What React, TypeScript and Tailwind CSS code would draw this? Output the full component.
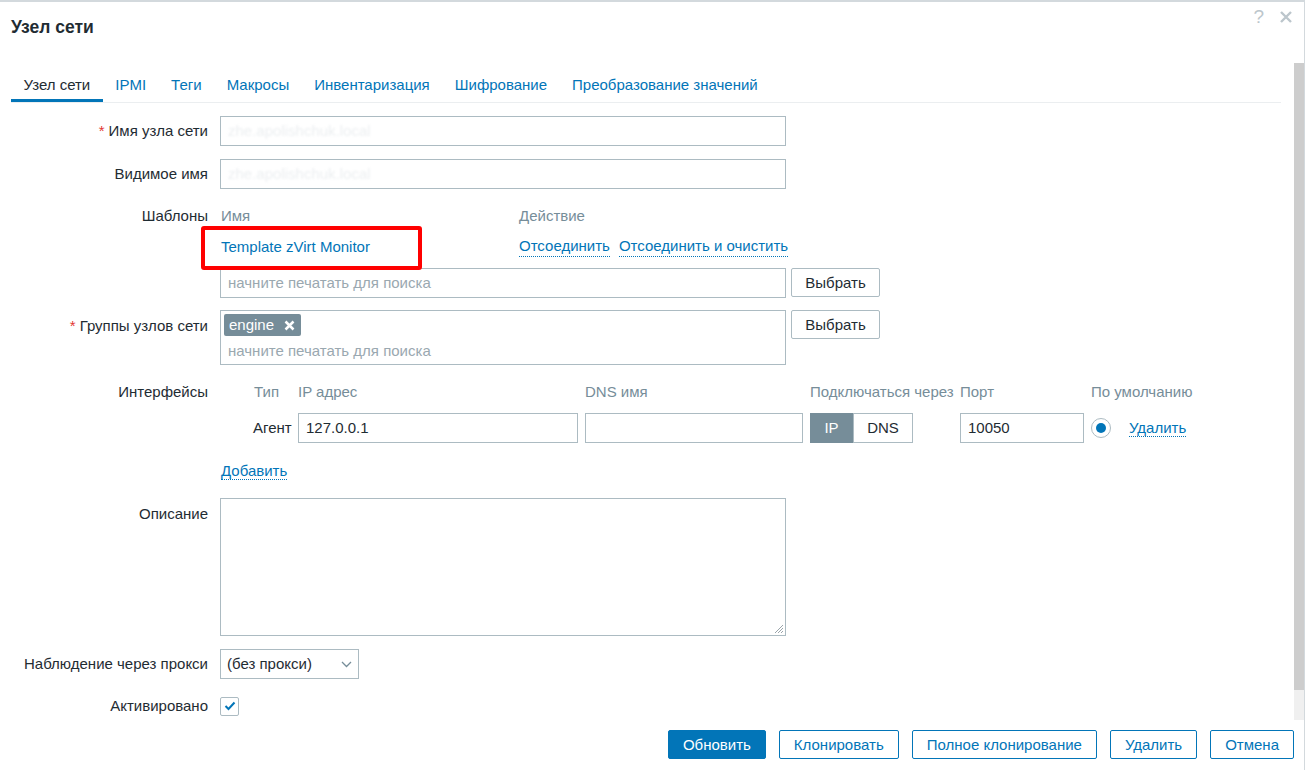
const ink = "text-[#1f2c33]";

function Field({ value, width = "w-[566px]" }: { value?: string; width?: string }) {
  return (
    <div className={`${width} h-[30px] border border-[#acbbc2] bg-white px-[7px] leading-[28px] ${ink} overflow-hidden whitespace-nowrap`}>
      {value}
    </div>
  )
}

function Placeholder({ text, width = "w-[566px]" }: { text: string; width?: string }) {
  return (
    <div className={`${width} h-[30px] border border-[#acbbc2] bg-white px-[7px] leading-[28px] text-[#9aa8b0] whitespace-nowrap`}>
      {text}
    </div>
  )
}

function Hidden() {
  return (
    <div className="w-[566px] h-[30px] border border-[#acbbc2] overflow-hidden">
      <div className="px-[7px] leading-[28px] text-[#eceff1] blur-[0.8px]">zhe.apolishchuk.local</div>
    </div>
  )
}

function Btn({ children, primary = false }: { children: React.ReactNode; primary?: boolean }) {
  return (
    <button
      className={`h-[29px] px-[14px] rounded-[2px] border border-[#0275b8] leading-[27px] ${primary ? "bg-[#0275b8] text-white" : "bg-white text-[#0275b8]"}`}
    >
      {children}
    </button>
  )
}

function GrayBtn({ children }: { children: React.ReactNode }) {
  return (
    <button className={`h-[29px] w-[89px] rounded-[2px] border border-[#acbbc2] bg-white ${ink} leading-[27px]`}>
      {children}
    </button>
  )
}

function DotLink({ children }: { children: React.ReactNode }) {
  return <span className="text-[#0275b8] border-b border-dotted border-[#0275b8] leading-[17px]">{children}</span>
}

function Label({ children, className = "" }: { children: React.ReactNode; className?: string }) {
  return <div className={`w-[208px] shrink-0 text-right whitespace-nowrap ${ink} ${className}`}>{children}</div>
}

function Req() {
  return <span className="text-[#e33734] mr-[4px]">*</span>
}

export default function App() {
  const tabs = ["Узел сети", "IPMI", "Теги", "Макросы", "Инвентаризация", "Шифрование", "Преобразование значений"]
  return (
    <div
      className="relative w-[1305px] h-[770px] overflow-hidden bg-white border-t-2 border-r border-[#d3d9dd] text-[15px]"
      style={{ fontFamily: '"Liberation Sans", Arial, sans-serif' }}
    >
      {/* header */}
      <div className="flex justify-between h-[50px] pl-[11px] pr-[12px]">
        <div className={`self-center text-[17.5px] font-bold ${ink}`}>Узел сети</div>
        <div className="flex items-start gap-[16px] pt-[4px] text-[#bcc6cc]">
          <span className="text-[19px] leading-[22px]">?</span>
          <svg width="12" height="12" viewBox="0 0 12 12" className="mt-[5px]">
            <path d="M1 1 L11 11 M11 1 L1 11" stroke="#bcc6cc" strokeWidth="2.4" />
          </svg>
        </div>
      </div>

      {/* tabs */}
      <div className="mt-[18px] ml-[11px] w-[1270px] flex border-b border-[#ebeef0]">
        {tabs.map((t, i) => (
          <div
            key={t}
            className={`px-[12.5px] pt-[6px] pb-[5px] leading-[18px] whitespace-nowrap border-b-[3px] ${i === 0 ? "border-[#0275b8] text-[#1f2c33]" : "border-transparent text-[#0275b8]"}`}
          >
            {t}
          </div>
        ))}
      </div>

      {/* form */}
      <div className="flex flex-col">
        <div className="flex items-start mt-[13px]">
          <Label className="leading-[30px]"><Req />Имя узла сети</Label>
          <div className="ml-[12px]"><Hidden /></div>
        </div>

        <div className="flex items-start mt-[13px]">
          <Label className="leading-[30px]">Видимое имя</Label>
          <div className="ml-[12px]"><Hidden /></div>
        </div>

        {/* templates */}
        <div className="flex items-start mt-[17px]">
          <Label className="leading-[20px]">Шаблоны</Label>
          <div className="ml-[12px] flex flex-col">
            <div className="flex leading-[20px] text-[#768d99] pl-[1px]">
              <div className="w-[298px]">Имя</div>
              <div>Действие</div>
            </div>
            <div className="flex leading-[20px] mt-[11px] pl-[1px]">
              <div className="w-[298px]">
                <span className="relative text-[#0275b8]">
                  Template zVirt Monitor
                  <span className="absolute left-[-20px] top-[-12px] w-[221px] h-[44px] border-[4px] border-[#ff0000] rounded-[3px]" />
                </span>
              </div>
              <div className="flex gap-[9px]">
                <DotLink>Отсоединить</DotLink>
                <DotLink>Отсоединить и очистить</DotLink>
              </div>
            </div>
            <div className="flex items-start mt-[11px] gap-[5px]">
              <Placeholder text="начните печатать для поиска" />
              <GrayBtn>Выбрать</GrayBtn>
            </div>
          </div>
        </div>

        {/* host groups */}
        <div className="flex items-start mt-[12px]">
          <Label className="leading-[20px] mt-[6px]"><Req />Группы узлов сети</Label>
          <div className="ml-[12px] flex items-start gap-[5px]">
            <div className="w-[566px] h-[55px] border border-[#acbbc2] pt-[3px] px-[3px]">
              <div className="inline-flex items-center h-[22px] pl-[5px] pr-[6px] gap-[10px] rounded-[2px] bg-[#768d99] text-white leading-[22px]">
                engine
                <svg width="11" height="11" viewBox="0 0 11 11">
                  <path d="M1.5 1.5 L9.5 9.5 M9.5 1.5 L1.5 9.5" stroke="white" strokeWidth="2.5" />
                </svg>
              </div>
              <div className="mt-[4px] pl-[4px] leading-[20px] text-[#9aa8b0]">начните печатать для поиска</div>
            </div>
            <GrayBtn>Выбрать</GrayBtn>
          </div>
        </div>

        {/* interfaces */}
        <div className="flex items-start mt-[17px]">
          <Label className="leading-[20px]">Интерфейсы</Label>
          <div className="ml-[12px] flex flex-col">
            <div className="flex leading-[20px] text-[#768d99] whitespace-nowrap">
              <div className="w-[78px] pl-[34px]">Тип</div>
              <div className="w-[287px]">IP адрес</div>
              <div className="w-[225px]">DNS имя</div>
              <div className="w-[150px]">Подключаться через</div>
              <div className="w-[131px]">Порт</div>
              <div>По умолчанию</div>
            </div>
            <div className="flex items-center mt-[11px] h-[30px]">
              <div className={`w-[78px] pl-[33px] ${ink}`}>Агент</div>
              <div className="w-[287px]"><Field value="127.0.0.1" width="w-[280px]" /></div>
              <div className="w-[225px]"><Field width="w-[218px]" /></div>
              <div className="w-[150px] flex h-[30px]">
                <div className="w-[43px] bg-[#768d99] text-white flex items-center justify-center">IP</div>
                <div className={`w-[60px] border border-[#acbbc2] flex items-center justify-center ${ink}`}>DNS</div>
              </div>
              <div className="w-[131px]"><Field value="10050" width="w-[124px]" /></div>
              <div className="flex items-center">
                <div className="w-[20px] h-[20px] rounded-full border border-[#acbbc2] flex items-center justify-center">
                  <div className="w-[10px] h-[10px] rounded-full bg-[#0275b8]" />
                </div>
                <div className="ml-[18px]"><DotLink>Удалить</DotLink></div>
              </div>
            </div>
          </div>
        </div>

        <div className="flex mt-[18px] leading-[20px]">
          <div className="w-[220px]" />
          <div className="pl-[1px]"><DotLink>Добавить</DotLink></div>
        </div>

        {/* description */}
        <div className="flex items-start mt-[17px]">
          <Label className="leading-[20px] mt-[6px]">Описание</Label>
          <div className="ml-[12px] relative w-[566px] h-[138px] border border-[#acbbc2]">
            <svg width="10" height="10" viewBox="0 0 10 10" className="absolute right-[1px] bottom-[1px]">
              <path d="M9 1 L1 9 M9 4 L4 9 M9 7 L7 9" stroke="#9aa4aa" strokeWidth="1" />
            </svg>
          </div>
        </div>

        {/* proxy */}
        <div className="flex items-start mt-[13px]">
          <Label className="leading-[30px]">Наблюдение через прокси</Label>
          <div className={`ml-[12px] w-[139px] h-[30px] border border-[#acbbc2] flex items-center justify-between pl-[6px] pr-[6px] ${ink}`}>
            <span>(без прокси)</span>
            <svg width="11" height="7" viewBox="0 0 11 7">
              <path d="M1 1 L5.5 5.5 L10 1" stroke="#768d99" strokeWidth="1.3" fill="none" />
            </svg>
          </div>
        </div>

        {/* enabled */}
        <div className="flex items-center mt-[17px]">
          <Label className="leading-[20px]">Активировано</Label>
          <div className="ml-[12px] w-[19px] h-[19px] border border-[#acbbc2] rounded-[2px] flex items-center justify-center">
            <svg width="12" height="10" viewBox="0 0 12 10">
              <path d="M1.5 5 L4.5 8 L10.5 1.5" stroke="#0275b8" strokeWidth="2" fill="none" />
            </svg>
          </div>
        </div>

        {/* footer */}
        <div className="flex justify-end gap-[13px] pr-[10px] mt-[14px]">
          <Btn primary>Обновить</Btn>
          <Btn>Клонировать</Btn>
          <Btn>Полное клонирование</Btn>
          <Btn>Удалить</Btn>
          <Btn>Отмена</Btn>
        </div>
      </div>

      {/* scrollbar overlay */}
      <div className="absolute right-0 top-[61px] w-[10px] h-[627px] bg-[#cdcdcd]" />
      <div className="absolute right-0 top-[688px] w-[10px] h-[30px] bg-[#f0f0f0]" />
    </div>
  )
}
